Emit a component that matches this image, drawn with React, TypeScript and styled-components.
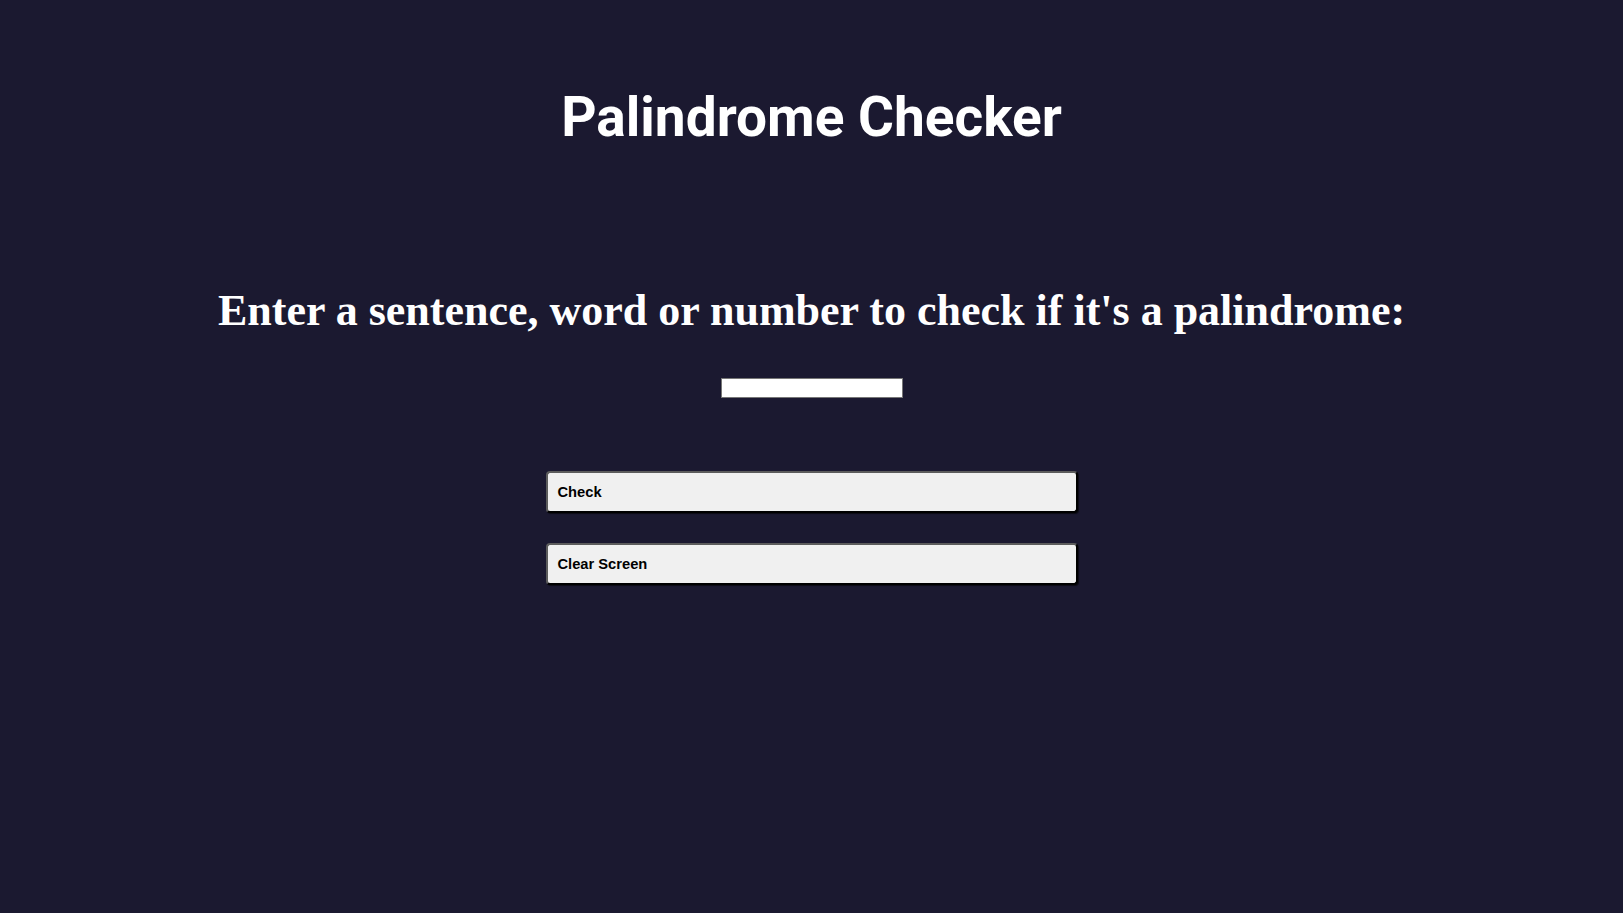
import React, { useState } from 'react';
import styled, { createGlobalStyle } from 'styled-components';

const GlobalStyle = createGlobalStyle`
  html, body {
    margin: 0;
    padding: 0;
    background: #1b1930;
  }
  body {
    min-height: 100vh;
  }
`;

const Page = styled.main`
  min-height: 100vh;
  display: flex;
  flex-direction: column;
  align-items: center;
  padding-top: 84px;
  box-sizing: border-box;
  background: #1b1930;
  color: #ffffff;
`;

const Title = styled.h1`
  margin: 0;
  font-family: Roboto, 'Liberation Sans', sans-serif;
  font-weight: 700;
  font-size: 55px;
  line-height: 67px;
  color: #ffffff;
`;

const Prompt = styled.h2`
  margin: 135px 0 0;
  font-family: 'Liberation Serif', 'Times New Roman', serif;
  font-weight: 700;
  font-size: 44px;
  line-height: 50px;
  color: #ffffff;
`;

const TextInput = styled.input`
  margin-top: 42px;
  width: 182px;
  height: 20px;
  box-sizing: border-box;
  padding: 1px 2px;
  border: 1px solid #767676;
  border-radius: 0;
  background: #ffffff;
  font-family: 'Liberation Sans', Arial, sans-serif;
  font-size: 13px;
  outline: none;
`;

const Actions = styled.div`
  display: flex;
  flex-direction: column;
  gap: 30px;
  margin-top: 73px;
`;

const ActionButton = styled.button`
  width: 532px;
  height: 42px;
  box-sizing: border-box;
  padding: 0 10px;
  text-align: left;
  background: #f0f0f0;
  color: #000000;
  font-family: 'Liberation Sans', Arial, sans-serif;
  font-weight: 700;
  font-size: 14.7px;
  border-style: solid;
  border-width: 2px;
  border-color: #5c5c5c #000000 #000000 #5c5c5c;
  border-radius: 4px;
  box-shadow: 1px 1px 1px rgba(0, 0, 0, 0.6);
  cursor: pointer;
`;

const Result = styled.p`
  margin: 24px 0 0;
  font-family: 'Liberation Sans', Arial, sans-serif;
  font-size: 20px;
  color: #ffffff;
`;

const isPalindrome = (value: string) => {
  const clean = value.toLowerCase().replace(/[^a-z0-9]/g, '');
  return clean.length > 0 && clean === clean.split('').reverse().join('');
};

export default function App() {
  const [text, setText] = useState('');
  const [result, setResult] = useState<string | null>(null);

  const check = () => {
    if (!text.trim()) {
      setResult(null);
      return;
    }
    setResult(isPalindrome(text) ? `"${text}" is a palindrome` : `"${text}" is not a palindrome`);
  };

  const clear = () => {
    setText('');
    setResult(null);
  };

  return (
    <>
      <GlobalStyle />
      <Page>
        <Title>Palindrome Checker</Title>
        <Prompt>Enter a sentence, word or number to check if it's a palindrome:</Prompt>
        <TextInput type="text" value={text} onChange={e => setText(e.target.value)} />
        <Actions>
          <ActionButton onClick={check}>Check</ActionButton>
          <ActionButton onClick={clear}>Clear Screen</ActionButton>
        </Actions>
        {result && <Result>{result}</Result>}
      </Page>
    </>
  );
}
